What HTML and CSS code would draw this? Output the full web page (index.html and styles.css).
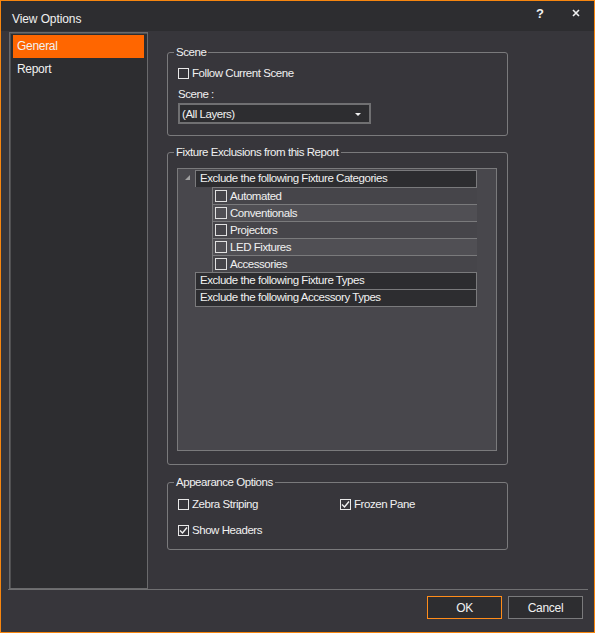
FILE: index.html
```html
<!DOCTYPE html>
<html>
<head>
<meta charset="utf-8">
<link rel="stylesheet" href="styles.css">
</head>
<body>
<div class="dialog">
  <div class="titlebar">
    <span class="title">View Options</span>
    <span class="tb-btns"><span class="tb-help">?</span><span class="tb-close"><svg viewBox="0 0 8 8" width="8" height="8"><path d="M1 1 L7 7 M7 1 L1 7" stroke="#f1f1f1" stroke-width="1.6"/></svg></span></span>
  </div>
  <div class="main">
    <div class="nav">
      <div class="nav-item active">General</div>
      <div class="nav-item">Report</div>
    </div>
    <div class="content">
      <fieldset class="group g-scene">
        <legend>Scene</legend>
        <div class="gbody">
          <label class="chk"><span class="box"></span>Follow Current Scene</label>
          <div class="lbl">Scene :</div>
          <div class="combo"><span>(All Layers)</span><span class="arrow"></span></div>
        </div>
      </fieldset>
      <fieldset class="group g-fix">
        <legend>Fixture Exclusions from this Report</legend>
        <div class="gbody">
          <div class="tree">
            <div class="node">
              <div class="row top"><span class="exp"></span><span class="cell">Exclude the following Fixture Categories</span></div>
              <div class="children">
                <div class="crow a"><span class="box"></span>Automated</div>
                <div class="crow b"><span class="box"></span>Conventionals</div>
                <div class="crow a"><span class="box"></span>Projectors</div>
                <div class="crow b"><span class="box"></span>LED Fixtures</div>
                <div class="crow a"><span class="box"></span>Accessories</div>
              </div>
            </div>
            <div class="row top"><span class="exp none"></span><span class="cell">Exclude the following Fixture Types</span></div>
            <div class="row top"><span class="exp none"></span><span class="cell last">Exclude the following Accessory Types</span></div>
          </div>
        </div>
      </fieldset>
      <fieldset class="group g-app">
        <legend>Appearance Options</legend>
        <div class="gbody">
          <div class="opts">
            <label class="chk"><span class="box"></span>Zebra Striping</label>
            <label class="chk"><span class="box checked"><svg viewBox="0 0 11 11" width="11" height="11"><path d="M2 5.5 L4.5 8 L9 2.5" fill="none" stroke="#f0f0f0" stroke-width="1.4"/></svg></span>Frozen Pane</label>
            <label class="chk"><span class="box checked"><svg viewBox="0 0 11 11" width="11" height="11"><path d="M2 5.5 L4.5 8 L9 2.5" fill="none" stroke="#f0f0f0" stroke-width="1.4"/></svg></span>Show Headers</label>
          </div>
        </div>
      </fieldset>
    </div>
  </div>
  <div class="footer">
    <button class="btn ok">OK</button>
    <button class="btn">Cancel</button>
  </div>
</div>
</body>
</html>
```
FILE: styles.css
```css
html, body { margin: 0; padding: 0; background: #37363b; }
* { box-sizing: border-box; }
body { font-family: "Liberation Sans", Arial, sans-serif; font-size: 11.5px; letter-spacing: -0.45px; color: #f1f1f1; }
.dialog {
  width: 595px; height: 633px;
  border: 1px solid #f7860f;
  background: #37363b;
  display: flex; flex-direction: column;
}
.titlebar {
  height: 30px; background: #2d2d30;
  display: flex; align-items: center; justify-content: space-between;
  padding: 0 0 0 11px;
}
.title { font-size: 12px; letter-spacing: -0.1px; margin-top: 6px; }
.tb-btns { display: flex; align-items: center; height: 100%; }
.tb-help { width: 36px; text-align: center; font-weight: bold; font-size: 13px; letter-spacing: 0; margin-top: -6px; }
.tb-close { width: 36px; display: flex; justify-content: center; margin-top: -6px; }
.tb-close svg { display: block; }
.main {
  display: flex;
  margin: 0 6px 0 7px;
  padding: 1px 0 0 1px;
  height: 559px;
  border-bottom: 1px solid #707072;
}
.nav {
  width: 139px; height: 557px;
  border: 1px solid #6a6a6c;
  box-shadow: inset 1px 1px 0 #505052;
  background: #2d2d30;
  padding: 2px 3px 0 3px;
}
.nav-item { height: 23px; line-height: 23px; padding-left: 4px; font-size: 12px; letter-spacing: -0.3px; }
.nav-item.active { background: #ff6600; }
.content { margin-left: 19px; width: 341px; display: flex; flex-direction: column; }
.group {
  margin: 0; padding: 0;
  border: 1px solid #7a7a7c;
  border-radius: 3px;
  min-width: 0;
}
.group legend {
  margin-left: 6px; padding: 0 2px;
  line-height: 14px;
}
.g-scene { margin-top: 13px; height: 91px; }
.g-scene .gbody { padding: 7px 0 0 10px; }
.g-fix { margin-top: 9px; height: 320px; }
.g-fix .gbody { padding: 9px 0 0 9px; }
.g-app { margin-top: 10px; height: 75px; }
.g-app .gbody { padding: 7px 0 0 10px; }
.chk { display: flex; align-items: center; height: 14px; }
.box {
  width: 11px; height: 11px; border: 1px solid #e8e8e8;
  margin-right: 3px; flex: none; display: inline-flex; align-items: center; justify-content: center;
}
.box svg { display: block; margin: -1px; }
.lbl { margin-top: 7px; height: 14px; line-height: 14px; }
.combo {
  margin-top: 2px; width: 193px; height: 21px;
  border: 2px solid #707072;
  background: #2d2d30;
  display: flex; align-items: center; justify-content: space-between;
  padding: 0 8px 0 2px;
}
.arrow { width: 0; height: 0; border-left: 3px solid transparent; border-right: 3px solid transparent; border-top: 3px solid #f1f1f1; margin-top: 1px; }
.tree {
  width: 320px; height: 283px;
  background: #48474c;
  border: 1px solid #7a7a7c;
  padding-top: 1px;
}
.row { display: flex; height: 17px; }
.exp { width: 17px; flex: none; position: relative; }
.exp::after {
  content: ""; position: absolute; left: 7px; top: 5px;
  width: 0; height: 0;
  border-left: 5px solid transparent; border-bottom: 5px solid #a0a0a0;
}
.exp.none::after { display: none; }
.cell {
  width: 282px; background: #2d2d30;
  border: 1px solid #7a7a7c; border-bottom: none;
  line-height: 15px; padding-left: 4px;
}
.cell.last { border-bottom: 1px solid #7a7a7c; height: 18px; }
.children { margin-left: 34px; width: 265px; border-left: 1px solid #7a7a7c; }
.crow {
  height: 17px; border-top: 1px solid #7a7a7c;
  display: flex; align-items: center; padding-left: 2px;
}
.crow.a { background: #46454a; }
.crow.b { background: #504f54; }
.crow .box { width: 12px; height: 12px; border-color: #e0e0e0; margin-right: 3px; }
.opts { display: grid; grid-template-columns: 162px 1fr; row-gap: 12px; margin-top: 1px; }
.footer { display: flex; justify-content: flex-end; padding: 6px 11px 0 0; gap: 6px; }
.btn {
  width: 75px; height: 23px;
  background: #2d2d30; color: #f1f1f1;
  border: 1px solid #7a7a7c;
  font-family: inherit; font-size: 12px; letter-spacing: -0.3px; padding: 0;
}
.btn.ok { border-color: #ff8c1a; }
```
